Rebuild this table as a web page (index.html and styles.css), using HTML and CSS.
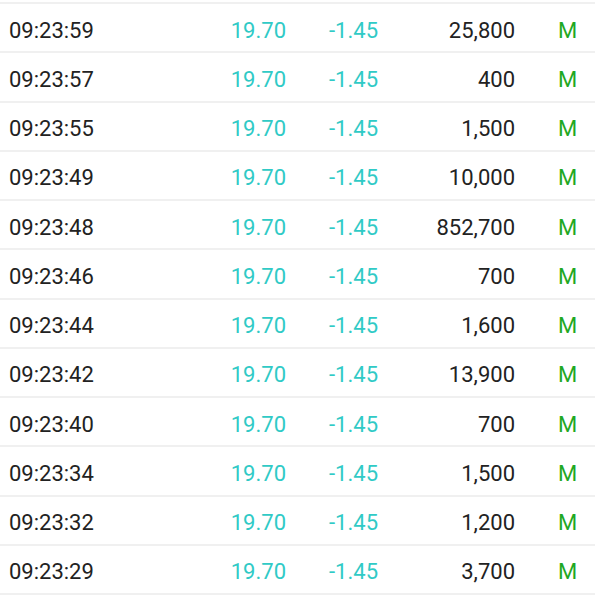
FILE: index.html
```html
<!DOCTYPE html>
<html>
<head>
<meta charset="utf-8">
<link rel="stylesheet" href="styles.css">
</head>
<body>
<div class="list">
  <div class="row"><span class="time">09:23:59</span><span class="price">19.70</span><span class="chg">-1.45</span><span class="vol">25,800</span><span class="flag">M</span></div>
  <div class="row"><span class="time">09:23:57</span><span class="price">19.70</span><span class="chg">-1.45</span><span class="vol">400</span><span class="flag">M</span></div>
  <div class="row"><span class="time">09:23:55</span><span class="price">19.70</span><span class="chg">-1.45</span><span class="vol">1,500</span><span class="flag">M</span></div>
  <div class="row"><span class="time">09:23:49</span><span class="price">19.70</span><span class="chg">-1.45</span><span class="vol">10,000</span><span class="flag">M</span></div>
  <div class="row"><span class="time">09:23:48</span><span class="price">19.70</span><span class="chg">-1.45</span><span class="vol">852,700</span><span class="flag">M</span></div>
  <div class="row"><span class="time">09:23:46</span><span class="price">19.70</span><span class="chg">-1.45</span><span class="vol">700</span><span class="flag">M</span></div>
  <div class="row"><span class="time">09:23:44</span><span class="price">19.70</span><span class="chg">-1.45</span><span class="vol">1,600</span><span class="flag">M</span></div>
  <div class="row"><span class="time">09:23:42</span><span class="price">19.70</span><span class="chg">-1.45</span><span class="vol">13,900</span><span class="flag">M</span></div>
  <div class="row"><span class="time">09:23:40</span><span class="price">19.70</span><span class="chg">-1.45</span><span class="vol">700</span><span class="flag">M</span></div>
  <div class="row"><span class="time">09:23:34</span><span class="price">19.70</span><span class="chg">-1.45</span><span class="vol">1,500</span><span class="flag">M</span></div>
  <div class="row"><span class="time">09:23:32</span><span class="price">19.70</span><span class="chg">-1.45</span><span class="vol">1,200</span><span class="flag">M</span></div>
  <div class="row"><span class="time">09:23:29</span><span class="price">19.70</span><span class="chg">-1.45</span><span class="vol">3,700</span><span class="flag">M</span></div>
</div>
</body>
</html>
```
FILE: styles.css
```css
html, body {
  margin: 0;
  padding: 0;
  background: #ffffff;
}
body {
  font-family: Roboto, "Noto Sans", sans-serif;
  font-size: 22px;
  color: #222222;
}
.list {
  width: 595px;
  margin-top: 2px;
  border-top: 2px solid #f0f0f0;
}
.row {
  height: 42.25px;
  padding-top: 5px;
  border-bottom: 2px solid #f0f0f0;
  display: grid;
  grid-template-columns: 180px 97px 92px 137px 1fr;
  align-items: center;
  padding-left: 9px;
  box-sizing: content-box;
}
.time { text-align: left; }
.price, .chg { text-align: right; color: #30cac6; }
.vol { text-align: right; color: #222222; }
.flag { color: #1fa824; padding-left: 43px; }
```
